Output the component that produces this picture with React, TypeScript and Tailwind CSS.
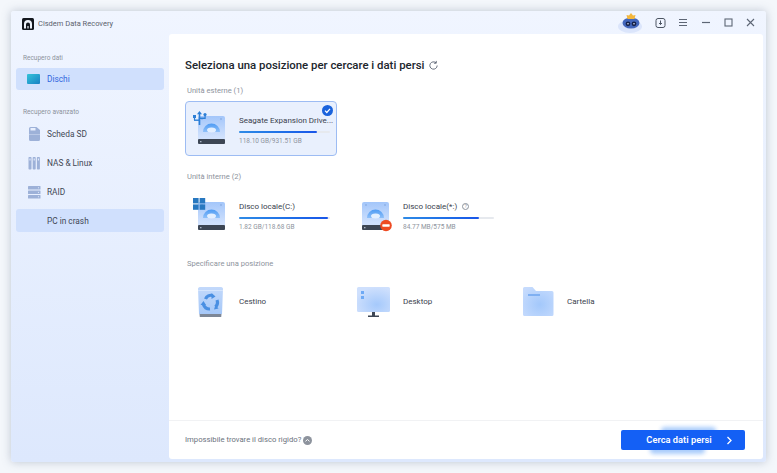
import type { ReactNode } from "react";

const DriveBody = ({ id }: { id: string }) => (
  <>
    <defs>
      <linearGradient id={id} x1="0" y1="0" x2="0" y2="1">
        <stop offset="0" stopColor="#a3c6fa" />
        <stop offset="0.75" stopColor="#d0e1fd" />
      </linearGradient>
      <linearGradient id={id + "Dome"} x1="0" y1="0" x2="0" y2="1">
        <stop offset="0" stopColor="#4e9bf4" />
        <stop offset="1" stopColor="#8fc0f9" />
      </linearGradient>
    </defs>
    <rect x="6" y="6" width="27" height="28" rx="2" fill={"url(#" + id + ")"} />
    <path d="M11 22a8.500 8.500 0 0 1 17 0z" fill={"url(#" + id + "Dome)"} />
    <ellipse cx="19.5" cy="20" rx="4.500" ry="2.500" fill="#e3efff" />
    <circle cx="10" cy="9" r="0.8" fill="#7ea3d8" />
    <circle cx="29" cy="9" r="0.8" fill="#7ea3d8" />
    <rect x="6" y="29" width="27" height="5" rx="1" fill="#3d4654" />
    <rect x="8" y="31" width="1.5" height="1.300" fill="#aab4c4" />
  </>
);

const UsbDrive = () => (
  <svg width="36" height="36" viewBox="0 0 36 36">
    <DriveBody id="driveUsb" />
    <g fill="#2d7fd6">
      <path d="M7.500 1 10 4.200H8.300V15H6.700V4.200H5z" />
      <rect x="1" y="5" width="3" height="3" />
      <rect x="1.900" y="7" width="1.200" height="3" />
      <path d="M2 9.500h5v1.400H2z" />
      <path d="M8 7.500h4.500v-2h1.200v3.400H8z" />
      <circle cx="13" cy="4.600" r="1.600" />
    </g>
  </svg>
);

const WinDrive = () => (
  <svg width="36" height="36" viewBox="0 0 36 36">
    <DriveBody id="driveWin" />
    <g fill="#2878c0">
      <rect x="1" y="2" width="5.600" height="5.400" />
      <rect x="7.600" y="2" width="5.600" height="5.400" />
      <rect x="1" y="8.400" width="5.600" height="5.400" />
      <rect x="7.600" y="8.400" width="5.600" height="5.400" />
    </g>
  </svg>
);

const BlockedDrive = () => (
  <svg width="36" height="36" viewBox="0 0 36 36">
    <DriveBody id="driveBlocked" />
    <circle cx="30" cy="29.500" r="5.800" fill="#ee4a22" />
    <rect x="26.300" y="28.300" width="7.400" height="2.400" rx="0.600" fill="#fff" />
  </svg>
);

const TrashIcon = () => (
  <svg width="36" height="36" viewBox="0 0 36 36">
    <defs>
      <linearGradient id="trashFill" x1="0" y1="0" x2="0" y2="1">
        <stop offset="0" stopColor="#c3d9fb" />
        <stop offset="1" stopColor="#a6c8f8" />
      </linearGradient>
    </defs>
    <path d="M6 4.500a2 2 0 0 1 2-1.500h21a2 2 0 0 1 2 1.500L30 30H7z" fill="url(#trashFill)" />
    <path d="M6 6.500h25" stroke="#d5e5fd" strokeWidth="1" />
    <path d="M7.500 30h22l-.3 3H7.800z" fill="#7d8797" />
    <g fill="none" stroke="#4a8fe2" strokeWidth="3.200">
      <path d="M13.500 15a6 6 0 0 1 7-3.500" />
      <path d="M25 16a6.500 6.500 0 0 1-1.500 7" />
      <path d="M18 25a6.500 6.500 0 0 1-6.500-4.500" />
    </g>
    <g fill="#4a8fe2">
      <path d="M19.500 9 23.500 12.500 19.500 15z" />
      <path d="M22 25.500l1.500-4.500 3 3.500z" />
      <path d="M8.500 21l3-4 2.500 4z" />
    </g>
  </svg>
);

const MonitorIcon = () => (
  <svg width="36" height="36" viewBox="0 0 36 36">
    <defs>
      <radialGradient id="screenFill" cx="0.6" cy="0.7" r="0.7">
        <stop offset="0" stopColor="#a5c9fb" />
        <stop offset="1" stopColor="#cfe0fd" />
      </radialGradient>
    </defs>
    <rect x="1" y="3" width="33" height="25" rx="1.500" fill="url(#screenFill)" />
    <rect x="5" y="7" width="3" height="3" fill="#6faaf5" />
    <rect x="5" y="12" width="3" height="3" fill="#6faaf5" />
    <rect x="16" y="28" width="3" height="4" fill="#3d4654" />
    <rect x="12" y="31.500" width="11" height="1.500" fill="#3d4654" />
  </svg>
);

const FolderIcon = () => (
  <svg width="36" height="36" viewBox="0 0 36 36">
    <defs>
      <radialGradient id="folderFill" cx="0.55" cy="0.6" r="0.7">
        <stop offset="0" stopColor="#a3c8fb" />
        <stop offset="1" stopColor="#c6dbfd" />
      </radialGradient>
    </defs>
    <path d="M3 4.500A1.500 1.500 0 0 1 4.500 3h8l3.500 4h16a1.500 1.500 0 0 1 1.500 1.500v22a1.500 1.500 0 0 1-1.500 1.500h-27A1.500 1.500 0 0 1 3 30.500z" fill="url(#folderFill)" />
    <rect x="8" y="10" width="12" height="2" fill="#7fb0f2" />
  </svg>
);

const SdIcon = () => (
  <svg width="14" height="14" viewBox="0 0 14 14" fill="#9db1d8">
    <path d="M2 1.500A1.500 1.500 0 0 1 3.500 0h6L13 3v9.500a1.500 1.500 0 0 1-1.500 1.500h-8A1.500 1.500 0 0 1 2 12.500z" />
    <rect x="3.500" y="1" width="5" height="2.500" fill="#e9f0fe" />
    <rect x="2" y="7" width="11" height="0.700" fill="#c7d4ee" />
  </svg>
);

const NasIcon = () => (
  <svg width="14" height="14" viewBox="0 0 14 14" fill="#9db1d8">
    <rect x="1.500" y="1" width="3" height="12.500" rx="0.800" />
    <rect x="5.700" y="1" width="3" height="12.500" rx="0.800" />
    <rect x="9.900" y="1" width="3" height="12.500" rx="0.800" />
    <g fill="#e9f0fe">
      <rect x="2.500" y="2.500" width="1" height="2" />
      <rect x="6.700" y="2.500" width="1" height="2" />
      <rect x="10.900" y="2.500" width="1" height="2" />
    </g>
  </svg>
);

const RaidIcon = () => (
  <svg width="14" height="14" viewBox="0 0 14 14" fill="#9db1d8">
    <rect x="1" y="1" width="12.500" height="3.500" rx="0.600" />
    <rect x="1" y="5.500" width="12.500" height="3.500" rx="0.600" />
    <rect x="1" y="10" width="12.500" height="3.500" rx="0.600" />
    <g fill="#e9f0fe">
      <circle cx="11.500" cy="2.750" r="0.600" />
      <circle cx="11.500" cy="7.250" r="0.600" />
      <circle cx="11.500" cy="11.750" r="0.600" />
    </g>
  </svg>
);

const AppLogo = () => (
  <svg width="12" height="12" viewBox="0 0 12 12">
    <rect width="12" height="12" rx="1.500" fill="#14181f" />
    <path d="M2 10.500V6a4 4 0 0 1 8 0v4.500H8V6.500a2 2 0 0 0-4 0v4z" fill="#eef3fb" />
    <rect x="5.400" y="8" width="1.200" height="2.500" fill="#eef3fb" />
  </svg>
);

const Avatar = () => (
  <svg width="26" height="24" viewBox="0 0 26 24">
    <ellipse cx="12" cy="15.500" rx="12" ry="6.500" fill="#dbe5fb" />
    <ellipse cx="13" cy="12" rx="8.500" ry="5.500" fill="#4467bb" />
    <circle cx="10" cy="12.800" r="2.400" fill="#16224a" />
    <circle cx="16" cy="12.800" r="2.400" fill="#16224a" />
    <circle cx="10" cy="12.800" r="0.800" fill="#dfe8fb" />
    <circle cx="16" cy="12.800" r="0.800" fill="#dfe8fb" />
    <path d="M13 2 15 4.500l2.500-.5L16.500 8h-7L8.500 4 11 4.500z" fill="#f4b73c" />
  </svg>
);

const WindowButtons = () => (
  <div className="flex items-center">
    <Avatar />
    <svg width="11" height="11" viewBox="0 0 11 11" fill="none" stroke="#4c5563" strokeWidth="1" className="ml-[11px]">
      <rect x="1" y="1.500" width="9" height="9" rx="2" />
      <path d="M5.500 3.500v4M4 6l1.500 1.500L7 6" />
    </svg>
    <svg width="10" height="9" viewBox="0 0 10 9" fill="none" stroke="#5d6675" strokeWidth="1" className="ml-[12px]">
      <path d="M1 1.500h8M1 4.500h8M1 7.500h8" />
    </svg>
    <svg width="10" height="9" viewBox="0 0 10 9" fill="none" stroke="#5d6675" strokeWidth="1.200" className="ml-[13px]">
      <path d="M1 4.500h8" />
    </svg>
    <svg width="9" height="9" viewBox="0 0 9 9" fill="none" stroke="#5d6675" strokeWidth="1.100" className="ml-[13px]">
      <rect x="1" y="1" width="7" height="7" />
    </svg>
    <svg width="9" height="9" viewBox="0 0 9 9" fill="none" stroke="#5d6675" strokeWidth="1.100" className="ml-[13px]">
      <path d="M1 1l7 7M8 1 1 8" />
    </svg>
  </div>
);

const SideRow = ({ icon, label }: { icon?: ReactNode; label: string }) => (
  <div className="flex items-center h-[23px] pl-[11px]">
    <span className="w-[20px] flex items-center">{icon}</span>
    <span className="pt-[1px] text-[8.300px] text-[#3f4754]">{label}</span>
  </div>
);

const Label = ({ children, className }: { children: ReactNode; className: string }) => (
  <div className={"h-[12px] pt-[1px] leading-[12px] text-[7.600px] text-[#8d939d] pl-[2px] " + className}>{children}</div>
);

const DriveItem = ({
  icon,
  name,
  size,
  used,
  badge,
}: {
  icon: ReactNode;
  name: string;
  size: string;
  used: number;
  badge?: boolean;
}) => (
  <>
    <div className="w-[36px] shrink-0 -mt-[2px]">{icon}</div>
    <div className="w-[91px] ml-[11px] mt-[4px]">
      <div className="flex items-center h-[12px] pt-[1px] text-[8px] leading-[12px] text-[#3a414d] whitespace-nowrap">
        {name}
        {badge && (
          <span className="ml-[5px] w-[7px] h-[7px] rounded-full border border-[#8d939d] text-[5px] leading-[5px] text-center text-[#8d939d]">?</span>
        )}
      </div>
      <div className="h-[2px] mt-[5px] bg-[#e6e9ee] rounded-full">
        <div className="h-full rounded-full bg-gradient-to-r from-[#2f8be6] to-[#1a55e8]" style={{ width: used + "%" }} />
      </div>
      <div className="h-[11px] mt-[3px] text-[6.500px] leading-[11px] text-[#8d939d] whitespace-nowrap">{size}</div>
    </div>
  </>
);

const PlaceItem = ({ icon, name }: { icon: ReactNode; name: string }) => (
  <div className="flex items-center h-[55px] pl-[7px]">
    <div className="w-[36px] shrink-0">{icon}</div>
    <span className="ml-[11px] pt-[1px] text-[8px] text-[#3a414d]">{name}</span>
  </div>
);

export default function App() {
  return (
    <div className="w-[777px] h-[473px] overflow-hidden bg-[#f4f7fb] pt-[11px] pl-[11px] font-['Roboto',sans-serif]">
      <div className="w-[755px] h-[451px] flex flex-col rounded-[3px] shadow-[0_0_10px_rgba(90,105,135,0.35)] bg-gradient-to-b from-[#f0f5ff] to-[#dde8fd]">
        {/* title bar */}
        <div className="h-[23px] shrink-0 flex items-center justify-between pl-[11px] pr-[11px]">
          <div className="flex items-center mt-[2px]">
            <AppLogo />
            <span className="ml-[4px] text-[7.500px] text-[#5b626e]">Cisdem Data Recovery</span>
          </div>
          <WindowButtons />
        </div>

        <div className="flex-1 flex min-h-0">
          {/* sidebar */}
          <aside className="w-[158px] shrink-0 pl-[5px] pr-[5px] pt-[18px]">
            <div className="h-[12px] leading-[12px] text-[6.500px] text-[#8d939d] pl-[7px]">Recupero dati</div>
            <div className="flex items-center h-[22px] mt-[4px] pl-[11px] rounded-[3px] bg-[#d0e0fd]">
              <span className="w-[20px] flex items-center">
                <span className="block w-[13px] h-[10px] rounded-[1px] bg-gradient-to-br from-[#35c3d8] to-[#1a80c4]" />
              </span>
              <span className="pt-[1px] text-[8.300px] text-[#2f66dd]">Dischi</span>
            </div>
            <div className="h-[12px] leading-[12px] mt-[16px] text-[6.600px] text-[#8d939d] pl-[7px]">Recupero avanzato</div>
            <div className="flex flex-col gap-[6px] mt-[4px]">
              <SideRow icon={<SdIcon />} label="Scheda SD" />
              <SideRow icon={<NasIcon />} label="NAS & Linux" />
              <SideRow icon={<RaidIcon />} label="RAID" />
              <div className="rounded-[3px] bg-[#d0e0fd]">
                <SideRow label="PC in crash" />
              </div>
            </div>
          </aside>

          {/* main panel */}
          <main className="w-[594px] mb-[3px] flex flex-col bg-white rounded-[3px]">
            <div className="flex-1 pl-[16px] pt-[22px]">
              <div className="flex items-center h-[18px]">
                <h1 className="pt-[1px] text-[11.400px] font-medium text-[#20252c]">Seleziona una posizione per cercare i dati persi</h1>
                <svg width="11" height="11" viewBox="0 0 24 24" fill="none" stroke="#5d6675" strokeWidth="2" className="ml-[4px]">
                  <path d="M20 12a8 8 0 1 1-2.500-5.800" />
                  <path d="M18 2v5h-5" />
                </svg>
              </div>

              <Label className="mt-[10px]">Unità esterne (1)</Label>
              <div className="relative w-[152px] h-[55px] mt-[5px] flex items-center pl-[6px] rounded-[4px] border border-[#9dbcf3] bg-[#e9f0fd]">
                <DriveItem icon={<UsbDrive />} name="Seagate Expansion Drive..." size="118.10 GB/931.51 GB" used={86} />
                <svg width="11" height="11" viewBox="0 0 11 11" className="absolute top-[3px] right-[3px]">
                  <circle cx="5.500" cy="5.500" r="5.500" fill="#1a63dc" />
                  <path d="M3 5.700 4.800 7.500 8 3.800" fill="none" stroke="#fff" strokeWidth="1.200" />
                </svg>
              </div>

              <Label className="mt-[14px]">Unità interne (2)</Label>
              <div className="flex gap-[12px] mt-[5px]">
                <div className="w-[152px] h-[55px] flex items-center pl-[7px]">
                  <DriveItem icon={<WinDrive />} name="Disco locale(C:)" size="1.82 GB/118.68 GB" used={98} />
                </div>
                <div className="w-[152px] h-[55px] flex items-center pl-[7px]">
                  <DriveItem icon={<BlockedDrive />} name="Disco locale(*:)" size="84.77 MB/575 MB" used={84} badge />
                </div>
              </div>

              <Label className="mt-[15px]">Specificare una posizione</Label>
              <div className="grid grid-cols-[152px_152px_152px] gap-x-[12px] mt-[5px]">
                <PlaceItem icon={<TrashIcon />} name="Cestino" />
                <PlaceItem icon={<MonitorIcon />} name="Desktop" />
                <PlaceItem icon={<FolderIcon />} name="Cartella" />
              </div>
            </div>

            {/* footer */}
            <div className="h-[39px] shrink-0 border-t border-[#f1f2f4] flex items-start justify-between pl-[16px] pr-[18px] pt-[9px]">
              <div className="flex items-center h-[20px]">
                <span className="text-[7.700px] text-[#6b727d]">Impossibile trovare il disco rigido?</span>
                <svg width="9" height="9" viewBox="0 0 9 9" className="ml-[2px]">
                  <circle cx="4.500" cy="4.500" r="4.500" fill="#8d939d" />
                  <path d="M2.500 5.300 4.500 3.500l2 1.800" fill="none" stroke="#fff" strokeWidth="1" />
                </svg>
              </div>
              <div className="relative w-[124px] h-[20px]">
                <div className="absolute left-[40px] -top-[3px] w-[55px] h-[10px] bg-[#a9ccfb] blur-[2px] rounded" />
                <div className="absolute left-[29px] -bottom-[4px] w-[55px] h-[10px] bg-[#a9ccfb] blur-[2px] rounded" />
                <button className="relative w-full h-full flex items-center justify-center rounded-[2px] bg-[#1460f5] text-[9.300px] font-semibold text-white">
                  <span className="ml-[-8px]">Cerca dati persi</span>
                  <svg width="7" height="9" viewBox="0 0 7 9" fill="none" stroke="#fff" strokeWidth="1.300" className="absolute right-[12px]">
                    <path d="M1.500 1 5 4.500 1.500 8" />
                  </svg>
                </button>
              </div>
            </div>
          </main>
        </div>
      </div>
    </div>
  );
}
